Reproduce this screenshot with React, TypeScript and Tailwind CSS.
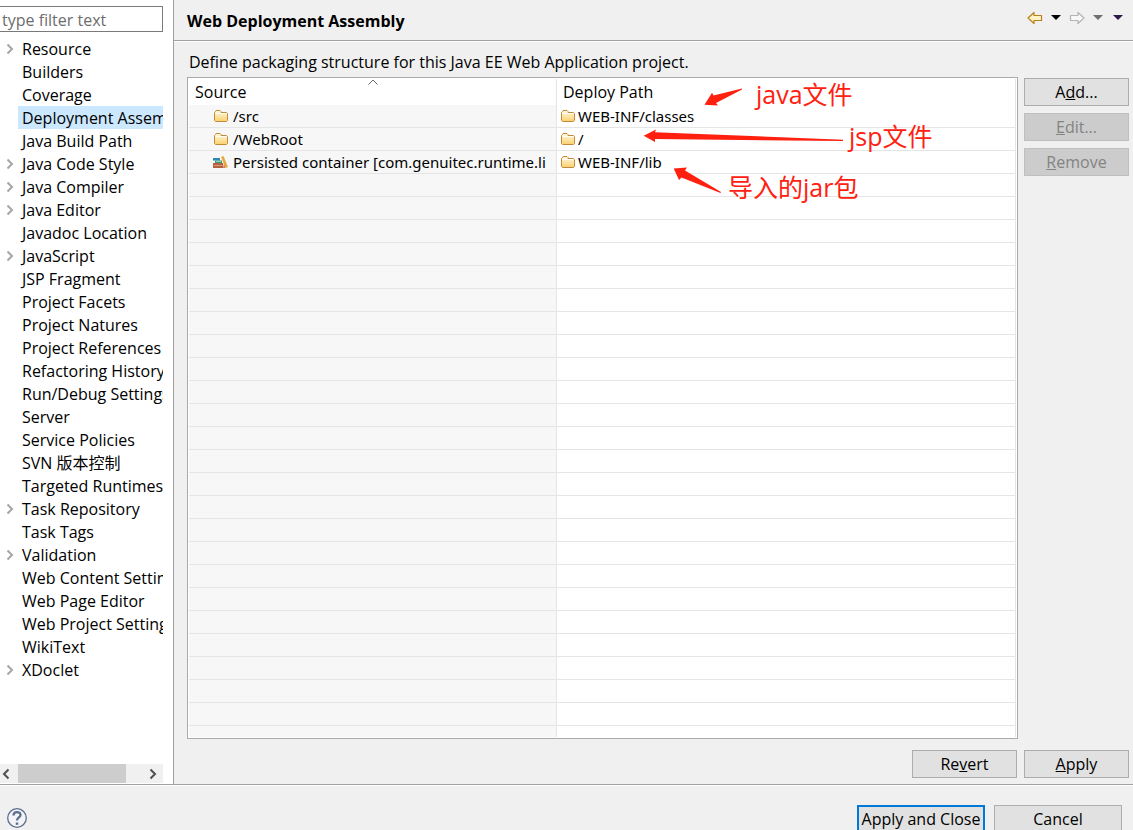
import React from "react";

type TreeItem = { label: string; expandable?: boolean; selected?: boolean };

const items: TreeItem[] = [
  { label: "Resource", expandable: true },
  { label: "Builders" },
  { label: "Coverage" },
  { label: "Deployment Assembly", selected: true },
  { label: "Java Build Path" },
  { label: "Java Code Style", expandable: true },
  { label: "Java Compiler", expandable: true },
  { label: "Java Editor", expandable: true },
  { label: "Javadoc Location" },
  { label: "JavaScript", expandable: true },
  { label: "JSP Fragment" },
  { label: "Project Facets" },
  { label: "Project Natures" },
  { label: "Project References" },
  { label: "Refactoring History" },
  { label: "Run/Debug Settings" },
  { label: "Server" },
  { label: "Service Policies" },
  { label: "SVN 版本控制" },
  { label: "Targeted Runtimes" },
  { label: "Task Repository", expandable: true },
  { label: "Task Tags" },
  { label: "Validation", expandable: true },
  { label: "Web Content Settings" },
  { label: "Web Page Editor" },
  { label: "Web Project Settings" },
  { label: "WikiText" },
  { label: "XDoclet", expandable: true },
];

const rows = [
  { source: "/src", path: "WEB-INF/classes", library: false },
  { source: "/WebRoot", path: "/", library: false },
  { source: "Persisted container [com.genuitec.runtime.li", path: "WEB-INF/lib", library: true },
];

const emptyRows = Array.from({ length: 60 }, (_, i) => i);

function Chevron({ className, left }: { className: string; left?: boolean }) {
  return (
    <svg width="8" height="12" viewBox="0 0 8 12" className={className} fill="none" stroke="currentColor" strokeWidth="2" aria-hidden="true">
      <path d={left ? "M6.500 1.500 2 6l4.500 4.500" : "M1.500 1.500 6 6l-4.500 4.500"} />
    </svg>
  );
}

function FolderIcon() {
  return (
    <svg width="14" height="12" viewBox="0 0 14 12" className="shrink-0" aria-hidden="true">
      <defs>
        <linearGradient id="folder" x1="0" y1="0" x2="0" y2="1">
          <stop offset="0" stopColor="#fffae6" />
          <stop offset="1" stopColor="#fbd06c" />
        </linearGradient>
      </defs>
      <path d="M1.500 11.500l-1-1v-8l1-1v-.5l.5-.5h4l1 1v1h5.500l1 1v7l-1 1z" fill="url(#folder)" stroke="#c48a3c" />
      <path d="M1.500 3.500h11" stroke="#fffdf4" />
    </svg>
  );
}

function LibraryIcon() {
  return (
    <svg width="15" height="12" viewBox="0 0 15 12" className="shrink-0" aria-hidden="true">
      <path d="M0 2h7v2.500H0z" fill="#2f86b4" />
      <path d="M2 4.500h7V7H2z" fill="#3d9a78" />
      <path d="M3 5.500h5" stroke="#8fd0b4" />
      <path d="M0 7h10v5H0z" fill="#b5603c" />
      <path d="M1 9.500h8.500" stroke="#dc9a78" />
      <path d="M8 1l2.500-1L15 11l-2.500 1z" fill="#eaa93e" />
      <path d="M11 7l-1 5h2.500z" fill="#c98a58" />
    </svg>
  );
}

function Caret({ className }: { className: string }) {
  return (
    <svg width="10" height="5" viewBox="0 0 10 5" className={className} fill="currentColor" aria-hidden="true">
      <path d="M0 0h10L5 5z" />
    </svg>
  );
}

const buttonBase = "h-7 border text-base leading-none whitespace-nowrap";
const enabled = "border-[#adadad] bg-[#e1e1e1] text-black";
const disabled = "border-[#bfbfbf] bg-[#cccccc] text-[#838383]";

export default function App() {
  return (
    <div className="flex h-screen flex-col overflow-hidden bg-[#f0f0f0] font-['Open_Sans','Noto_Sans_CJK_SC',sans-serif] text-base text-black">
      <div className="flex min-h-0 flex-1">
        <aside className="flex w-[174px] shrink-0 flex-col border-r border-[#a0a0a0] bg-white pt-1.5 pr-2.5">
          <input
            type="text"
            aria-label="Filter"
            placeholder="type filter text"
            className="h-[26px] w-full border border-l-0 border-[#7a7a7a] bg-white pt-px pl-0.5 placeholder:text-[#6d6d6d] focus:outline-none"
          />
          <ul className="mt-[5px] min-h-0 flex-1 overflow-hidden">
            {items.map((item) => (
              <li key={item.label} className="flex h-[23px] items-center">
                <span className="flex w-[18px] shrink-0 justify-center pl-0.5">
                  {item.expandable && <Chevron className="text-[#a6a6a6]" />}
                </span>
                <a
                  href="#"
                  className={
                    item.selected
                      ? "h-full min-w-0 flex-1 overflow-hidden bg-[#cce8ff] pl-1 leading-6 whitespace-nowrap"
                      : "h-full min-w-0 flex-1 overflow-hidden pl-1 leading-6 whitespace-nowrap"
                  }
                >
                  {item.label}
                </a>
              </li>
            ))}
          </ul>
          <div className="mb-px flex h-[19px] bg-[#f0f0f0]">
            <button type="button" aria-label="Scroll left" className="flex w-[18px] items-center pl-0.5">
              <Chevron left className="text-[#505050]" />
            </button>
            <div className="w-[108px] bg-[#cdcdcd]" />
            <button type="button" aria-label="Scroll right" className="ml-auto flex w-[18px] items-center pl-1">
              <Chevron className="text-[#505050]" />
            </button>
          </div>
        </aside>

        <main className="flex min-w-0 flex-1 flex-col">
          <header className="flex h-[42px] items-center justify-between border-b border-white shadow-[inset_0_-1px_0_#a0a0a0] pr-2.5 pl-[13px]">
            <h1 className="text-base font-bold">Web Deployment Assembly</h1>
            <div className="mb-1.5 flex items-center">
              <button type="button" aria-label="Back">
                <svg width="16" height="14" viewBox="0 0 16 14" aria-hidden="true">
                  <path d="M1 7l6-5.500v3h7.500v5H7v3z" fill="#fff3c4" stroke="#b8801c" strokeWidth="1.200" strokeLinejoin="round" />
                </svg>
              </button>
              <button type="button" aria-label="Back history" className="ml-2">
                <Caret className="text-black" />
              </button>
              <button type="button" aria-label="Forward" className="ml-2">
                <svg width="16" height="14" viewBox="0 0 16 14" aria-hidden="true">
                  <path d="M15 7 9 1.500v3H1.500v5H9v3z" fill="#f7f7f7" stroke="#b4b4b4" strokeWidth="1.200" strokeLinejoin="round" />
                </svg>
              </button>
              <button type="button" aria-label="Forward history" className="ml-2">
                <Caret className="text-[#6f6f6f]" />
              </button>
              <button type="button" aria-label="Menu" className="ml-2.5">
                <Caret className="text-[#2d1a4a]" />
              </button>
            </div>
          </header>

          <div className="flex min-h-0 flex-1 flex-col pt-[9px] pr-1 pb-1.5 pl-[13px]">
            <p className="mb-1 pl-0.5 leading-[22px]">
              Define packaging structure for this Java EE Web Application project.
            </p>
            <div className="flex min-h-0 flex-1 gap-1.5">
              <div className="relative min-w-0 flex-1 border border-[#a9a9ae] bg-white p-px">
                <div className="h-full overflow-hidden">
                  <table className="w-full table-fixed border-separate border-spacing-0">
                    <colgroup>
                      <col className="w-[368px]" />
                      <col />
                    </colgroup>
                    <thead>
                      <tr>
                        <th className="relative h-[26px] border-r border-[#e5e5e5] p-0 pl-1.5 text-left leading-[26px] font-normal">
                          Source
                          <svg width="10" height="6" viewBox="0 0 10 6" className="absolute top-0 left-1/2 -translate-x-1/2" fill="none" stroke="#6b6b6b" aria-hidden="true">
                            <path d="M.5 5.500 5 1l4.500 4.500" />
                          </svg>
                        </th>
                        <th className="h-[26px] border-r border-[#e5e5e5] p-0 pl-1.5 text-left leading-[26px] font-normal">Deploy Path</th>
                      </tr>
                    </thead>
                    <tbody className="font-['Noto_Sans','Noto_Sans_CJK_SC',sans-serif] text-[15px]">
                      {rows.map((row) => (
                        <tr key={row.source}>
                          <td className="h-[23px] border-r border-b border-[#e5e5e5] bg-[#f7f7f7] p-0 pl-6">
                            <div className="flex h-[22px] items-center gap-[5px] overflow-hidden whitespace-nowrap">
                              <span className="flex w-[15px] shrink-0 justify-end">
                                {row.library ? <LibraryIcon /> : <FolderIcon />}
                              </span>
                              {row.source}
                            </div>
                          </td>
                          <td className="h-[23px] border-r border-b border-[#e5e5e5] p-0 pl-1">
                            <div className="flex h-[22px] items-center gap-[3px] whitespace-nowrap">
                              <FolderIcon />
                              {row.path}
                            </div>
                          </td>
                        </tr>
                      ))}
                      {emptyRows.map((i) => (
                        <tr key={i}>
                          <td className="h-[23px] border-r border-b border-[#e5e5e5] bg-[#f7f7f7] p-0" />
                          <td className="h-[23px] border-r border-b border-[#e5e5e5] p-0" />
                        </tr>
                      ))}
                    </tbody>
                  </table>
                </div>
                <svg width="220" height="120" viewBox="638 78 220 120" className="pointer-events-none absolute top-0 left-[450px]" fill="#ff2010" aria-hidden="true">
                  <path d="M704.500 104.700 712 92.700 713.500 95.500 742 88.500 742 89.500 716 103 718 105.500z" />
                  <path d="M643.700 135.700 656 129.500 655 132.200 843 139.700 843 141 655 139 655 142z" />
                  <path d="M673.700 168.500 687 167.500 685 170.500 721 192 720.500 193 681.500 177.500 679 180z" />
                </svg>
                <span className="absolute top-0 left-[568px] text-[25px] leading-8 text-[#ff2010]">java文件</span>
                <span className="absolute top-[42px] left-[661px] text-[25px] leading-8 text-[#ff2010]">jsp文件</span>
                <span className="absolute top-[93px] left-[540px] text-[25px] leading-8 text-[#ff2010]">导入的jar包</span>
              </div>
              <div className="flex w-[105px] shrink-0 flex-col gap-[7px] pt-px">
                <button type="button" className={`${buttonBase} ${enabled}`}>A<u>d</u>d...</button>
                <button type="button" disabled className={`${buttonBase} ${disabled}`}><u>E</u>dit...</button>
                <button type="button" disabled className={`${buttonBase} ${disabled}`}><u>R</u>emove</button>
              </div>
            </div>
            <div className="mt-[11px] flex justify-end gap-[7px]">
              <button type="button" className={`w-[105px] ${buttonBase} ${enabled}`}>Re<u>v</u>ert</button>
              <button type="button" className={`w-[105px] ${buttonBase} ${enabled}`}><u>A</u>pply</button>
            </div>
          </div>
        </main>
      </div>

      <footer className="flex h-[46px] shrink-0 items-start justify-between border-t border-[#a0a0a0] pt-5 pr-[11px] pl-[7px] shadow-[inset_0_1px_0_#fff]">
        <button type="button" aria-label="Help" className="mt-[3px]">
          <svg width="20" height="20" viewBox="0 0 20 20" fill="none" stroke="#5a6e90" aria-hidden="true">
            <circle cx="10" cy="10" r="9.300" fill="#f4f4f6" strokeWidth="1.300" />
            <path d="M6.500 7.500c0-4.500 7-4.500 7-.5 0 2.500-3.500 2.500-3.500 5.500" strokeWidth="2.300" />
            <path d="M10 14.500v2.300" strokeWidth="2.500" />
          </svg>
        </button>
        <div className="flex gap-[9px]">
          <button type="button" className="h-7 w-32 border-2 border-[#0078d7] bg-[#e1e1e1] text-base leading-none whitespace-nowrap">
            Apply and Close
          </button>
          <button type="button" className={`w-32 ${buttonBase} ${enabled}`}>Cancel</button>
        </div>
      </footer>
    </div>
  );
}
